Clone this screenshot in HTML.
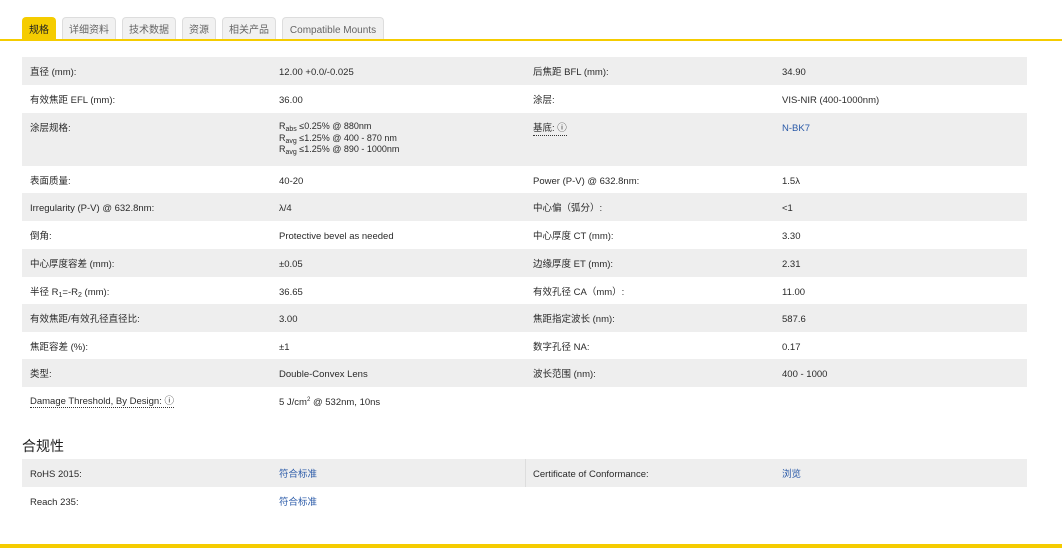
<!DOCTYPE html>
<html><head><meta charset="utf-8"><style>
body{margin:0;width:1062px;height:548px;background:#fff;font-family:"Liberation Sans","Noto Sans CJK SC",sans-serif;color:#333;position:relative;overflow:hidden;font-size:9.5px}
.tab{position:absolute;top:17px;height:23px;line-height:25px;text-align:center;background:#f1f1f1;border:1px solid #ddd;border-bottom:none;border-radius:4px 4px 0 0;box-sizing:border-box;color:#666;font-size:10px}
.tab.on{background:#f5cc00;border-color:#f5cc00;color:#222}
.line{position:absolute;left:0;top:39px;width:1062px;height:2px;background:#f5cc00}
.r{position:absolute;left:22px;width:1005px}
.g{background:#eeeeee}
.c{position:absolute;top:2px;line-height:28px;color:#2a2a2a}
.sub{font-size:7px;vertical-align:-2px;line-height:0}
.a{color:#2a5aa8}
.d{position:absolute;left:503px;top:0;width:1px;background:#ddd}
sup{font-size:6px;line-height:0}
</style></head><body>
<div class="tab on" style="left:22px;width:34px">规格</div>
<div class="tab" style="left:62px;width:54px">详细资料</div>
<div class="tab" style="left:122px;width:54px">技术数据</div>
<div class="tab" style="left:182px;width:34px">资源</div>
<div class="tab" style="left:222px;width:54px">相关产品</div>
<div class="tab" style="left:282px;width:102px">Compatible Mounts</div>
<div class="line"></div>

<div class="r g" style="top:57px;height:28px"><div class="c" style="left:8px">直径 (mm):</div><div class="c" style="left:257px">12.00 +0.0/-0.025</div><div class="c" style="left:511px">后焦距 BFL (mm):</div><div class="c" style="left:760px">34.90</div></div>
<div class="r" style="top:85px;height:28px"><div class="c" style="left:8px">有效焦距 EFL (mm):</div><div class="c" style="left:257px">36.00</div><div class="c" style="left:511px">涂层:</div><div class="c" style="left:760px">VIS-NIR (400-1000nm)</div></div>
<div class="r g" style="top:113px;height:53px"><div class="c" style="left:8px">涂层规格:</div><div class="c" style="left:257px;top:8px;line-height:11.5px;font-size:9px">R<span class="sub">abs</span> ≤0.25% @ 880nm<br>R<span class="sub">avg</span> ≤1.25% @ 400 - 870 nm<br>R<span class="sub">avg</span> ≤1.25% @ 890 - 1000nm</div><div class="c" style="left:511px"><span style="border-bottom:1px dotted #333;line-height:12px;display:inline-block">基底: ⓘ</span></div><div class="c a" style="left:760px">N-BK7</div></div>
<div class="r" style="top:166px;height:27px"><div class="c" style="left:8px">表面质量:</div><div class="c" style="left:257px">40-20</div><div class="c" style="left:511px">Power (P-V) @ 632.8nm:</div><div class="c" style="left:760px">1.5λ</div></div>
<div class="r g" style="top:193px;height:28px"><div class="c" style="left:8px">Irregularity (P-V) @ 632.8nm:</div><div class="c" style="left:257px">λ/4</div><div class="c" style="left:511px">中心偏（弧分）:</div><div class="c" style="left:760px">&lt;1</div></div>
<div class="r" style="top:221px;height:28px"><div class="c" style="left:8px">倒角:</div><div class="c" style="left:257px">Protective bevel as needed</div><div class="c" style="left:511px">中心厚度 CT (mm):</div><div class="c" style="left:760px">3.30</div></div>
<div class="r g" style="top:249px;height:28px"><div class="c" style="left:8px">中心厚度容差 (mm):</div><div class="c" style="left:257px">±0.05</div><div class="c" style="left:511px">边缘厚度 ET (mm):</div><div class="c" style="left:760px">2.31</div></div>
<div class="r" style="top:277px;height:27px"><div class="c" style="left:8px">半径 R<span class="sub">1</span>=-R<span class="sub">2</span> (mm):</div><div class="c" style="left:257px">36.65</div><div class="c" style="left:511px">有效孔径 CA（mm）:</div><div class="c" style="left:760px">11.00</div></div>
<div class="r g" style="top:304px;height:28px"><div class="c" style="left:8px">有效焦距/有效孔径直径比:</div><div class="c" style="left:257px">3.00</div><div class="c" style="left:511px">焦距指定波长 (nm):</div><div class="c" style="left:760px">587.6</div></div>
<div class="r" style="top:332px;height:27px"><div class="c" style="left:8px">焦距容差 (%):</div><div class="c" style="left:257px">±1</div><div class="c" style="left:511px">数字孔径 NA:</div><div class="c" style="left:760px">0.17</div></div>
<div class="r g" style="top:359px;height:28px"><div class="c" style="left:8px">类型:</div><div class="c" style="left:257px">Double-Convex Lens</div><div class="c" style="left:511px">波长范围 (nm):</div><div class="c" style="left:760px">400 - 1000</div></div>
<div class="r" style="top:387px;height:28px"><div class="c" style="left:8px;top:9px;line-height:12px"><span style="border-bottom:1px dotted #333">Damage Threshold, By Design: ⓘ</span></div><div class="c" style="left:257px">5 J/cm<sup>2</sup> @ 532nm, 10ns</div></div>

<div style="position:absolute;left:22px;top:436px;font-size:14px;color:#222">合规性</div>
<div class="r g" style="top:459px;height:28px"><div class="d" style="height:28px"></div><div class="c" style="left:8px">RoHS 2015:</div><div class="c a" style="left:257px">符合标准</div><div class="c" style="left:511px">Certificate of Conformance:</div><div class="c a" style="left:760px">浏览</div></div>
<div class="r" style="top:487px;height:27px"><div class="c" style="left:8px">Reach 235:</div><div class="c a" style="left:257px">符合标准</div></div>
<div style="position:absolute;left:0;top:544px;width:1062px;height:4px;background:#f5cc00"></div>
</body></html>
